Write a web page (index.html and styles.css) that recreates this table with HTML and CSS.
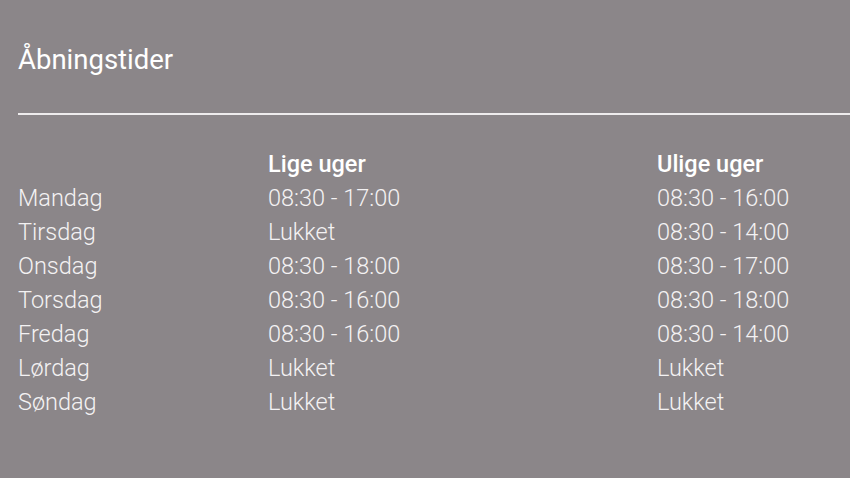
FILE: index.html
```html
<!DOCTYPE html>
<html lang="da">
<head>
<meta charset="utf-8">
<link rel="stylesheet" href="styles.css">
</head>
<body>
<div class="page">
  <h1 class="title">Åbningstider</h1>
  <hr class="rule">
  <div class="hours">
    <div class="cell"></div><div class="cell head">Lige uger</div><div class="cell head">Ulige uger</div>
    <div class="cell">Mandag</div><div class="cell">08:30 - 17:00</div><div class="cell">08:30 - 16:00</div>
    <div class="cell">Tirsdag</div><div class="cell">Lukket</div><div class="cell">08:30 - 14:00</div>
    <div class="cell">Onsdag</div><div class="cell">08:30 - 18:00</div><div class="cell">08:30 - 17:00</div>
    <div class="cell">Torsdag</div><div class="cell">08:30 - 16:00</div><div class="cell">08:30 - 18:00</div>
    <div class="cell">Fredag</div><div class="cell">08:30 - 16:00</div><div class="cell">08:30 - 14:00</div>
    <div class="cell">Lørdag</div><div class="cell">Lukket</div><div class="cell">Lukket</div>
    <div class="cell">Søndag</div><div class="cell">Lukket</div><div class="cell">Lukket</div>
  </div>
</div>
</body>
</html>
```
FILE: styles.css
```css
html, body {
  margin: 0;
  padding: 0;
  background: #8b8689;
}
body {
  font-family: Roboto, "Liberation Sans", sans-serif;
  color: #f4f2f3;
  overflow: hidden;
}
.page {
  padding: 44px 0 0 18px;
  width: 832px;
}
.title {
  margin: 0;
  font-size: 27.5px;
  font-weight: 400;
  line-height: 32px;
  color: #ffffff;
}
.rule {
  margin: 37px 0 0 0;
  border: 0;
  height: 2px;
  background: #eeeced;
}
.hours {
  margin-top: 32px;
  display: grid;
  grid-template-columns: 250px 389px 1fr;
  grid-auto-rows: 34px;
}
.cell {
  font-size: 23.5px;
  font-weight: 300;
  line-height: 34px;
  white-space: nowrap;
}
.head {
  font-weight: 500;
  color: #ffffff;
}
```
